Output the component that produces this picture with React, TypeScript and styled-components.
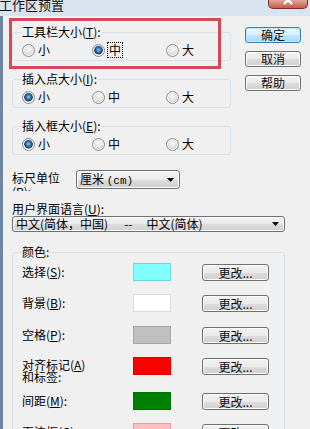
import React, { FC } from "react";
import styled, { createGlobalStyle } from "styled-components";

const GlobalStyle = createGlobalStyle`
  html, body {
    margin: 0;
    padding: 0;
  }
  body {
    width: 310px;
    height: 429px;
    overflow: hidden;
    background: #f0f0f0;
    font-family: "Noto Sans CJK SC", "Liberation Sans", sans-serif;
    font-size: 12px;
    color: #000;
  }
  * {
    box-sizing: border-box;
  }
`;

const Window = styled.div`
  position: relative;
  width: 310px;
  height: 429px;
  display: flex;
  flex-direction: column;
  overflow: hidden;
  background: #d8e3ef;
`;

const TitleBar = styled.div`
  height: 16px;
  flex: none;
  display: flex;
  justify-content: space-between;
  align-items: flex-start;
  overflow: hidden;
`;

const Title = styled.div`
  font-size: 13px;
  line-height: 13px;
  margin-top: -2px;
  margin-left: -1px;
  color: #111;
`;

const CloseButton = styled.div`
  width: 40px;
  height: 9px;
  margin-right: 2px;
  border: 1px solid #7c2f28;
  border-top: none;
  border-radius: 0 0 5px 5px;
  background: linear-gradient(#e3a699, #c65a4d);
  display: flex;
  justify-content: center;
  overflow: hidden;
`;

const Client = styled.div`
  flex: 1;
  min-height: 0;
  background: #f0f0f0;
  border-left: 3px solid #6f87a3;
  padding: 9px 0 0 9px;
  display: flex;
  flex-direction: column;
`;

const TopSection = styled.div`
  display: flex;
  gap: 14px;
`;

const GroupColumn = styled.div`
  width: 219px;
  display: flex;
  flex-direction: column;
  gap: 11px;
`;

const Group = styled.fieldset<{ $width?: number }>`
  margin: 0;
  min-width: 0;
  width: ${(p) => (p.$width ? `${p.$width}px` : "auto")};
  padding: 4px 9px 3px 9px;
  border: 1px solid #d5dfe5;
  border-radius: 3px;
`;

const Legend = styled.legend`
  padding: 0;
  font-size: 12px;
  line-height: 14px;
`;

const RadioRow = styled.div`
  display: grid;
  grid-template-columns: 70px 74px auto;
  height: 14px;
  align-items: center;
`;

const RadioOption = styled.label`
  display: flex;
  align-items: center;
  gap: 3px;
  line-height: 14px;
`;

const RadioCircle = styled.span<{ $checked?: boolean }>`
  width: 13px;
  height: 13px;
  border-radius: 50%;
  border: 1px solid #8a8f94;
  background: ${(p) =>
    p.$checked
      ? "radial-gradient(circle at 50% 45%, #8fd0f5 0, #3f7fb6 2px, #1d3e66 4px, #e8eef3 5px, #f4f4f4 100%)"
      : "radial-gradient(circle at 50% 40%, #fafafa 0, #e2e2e2 4px, #d0d0d0 6px)"};
  box-shadow: inset 0 0 0 1px #f8f8f8;
`;

const FocusText = styled.span`
  outline: 1px dotted #000;
  outline-offset: 0;
  padding: 0 1px;
`;

const ButtonColumn = styled.div`
  margin-top: 2px;
  display: flex;
  flex-direction: column;
  gap: 8px;
`;

const DialogButton = styled.div<{ $primary?: boolean; $width?: number; $height?: number }>`
  width: ${(p) => p.$width ?? 56}px;
  height: ${(p) => p.$height ?? 16}px;
  border: 1px solid ${(p) => (p.$primary ? "#3c7fb1" : "#707070")};
  border-radius: 3px;
  background: ${(p) =>
    p.$primary
      ? "linear-gradient(#eaf6fd 0%, #d9f0fc 50%, #bee6fd 51%, #a7d9f5 100%)"
      : "linear-gradient(#f2f2f2 0%, #ebebeb 50%, #dddddd 51%, #cfcfcf 100%)"};
  box-shadow: inset 0 0 0 1px ${(p) => (p.$primary ? "#c4e5f6" : "#fbfbfb")};
  display: flex;
  align-items: center;
  justify-content: center;
  font-size: 12px;
  line-height: 14px;
  color: #111;
`;

const RulerRow = styled.div`
  margin-top: 15px;
  height: 20px;
  display: flex;
  align-items: flex-start;
`;

const RulerLabel = styled.div`
  width: 64px;
  height: 20px;
  margin-top: 1px;
  line-height: 14px;
  overflow: hidden;
`;

const Select = styled.div<{ $width: number }>`
  width: ${(p) => p.$width}px;
  height: 19px;
  border: 1px solid #707070;
  border-radius: 3px;
  background: linear-gradient(#f2f2f2 0%, #ebebeb 50%, #dddddd 51%, #cfcfcf 100%);
  box-shadow: inset 0 0 0 1px #fbfbfb;
  display: flex;
  align-items: center;
  justify-content: space-between;
  padding: 0 5px 0 3px;
  line-height: 14px;
  white-space: pre;
`;

const Mono = styled.span`
  font-family: "Liberation Mono", monospace;
  font-size: 11px;
`;

const LangLabel = styled.div`
  margin-top: 12px;
  line-height: 14px;
`;

const Spacer = styled.span<{ $w: number }>`
  display: inline-block;
  width: ${(p) => p.$w}px;
`;

const ColorGroup = styled(Group)`
  margin-top: 13px;
  padding: 4px 9px 0 9px;
  flex: none;
`;

const ColorRow = styled.div<{ $h: number }>`
  height: ${(p) => p.$h}px;
  display: grid;
  grid-template-columns: 111px 38px auto;
  align-items: start;
`;

const RowLabel = styled.div<{ $twoLine?: boolean }>`
  margin-top: 2px;
  line-height: ${(p) => (p.$twoLine ? 12 : 14)}px;
`;

const Swatch = styled.div<{ $color: string }>`
  height: 18px;
  background: ${(p) => p.$color};
  border: 1px solid rgba(0, 0, 0, 0.14);
`;

const ChangeButton = styled(DialogButton)`
  margin-top: 1px;
  margin-left: 31px;
`;

const Highlight = styled.div`
  position: absolute;
  left: 9px;
  top: 18px;
  width: 212px;
  height: 51px;
  border: 3px solid #d24a55;
  pointer-events: none;
`;

const Arrow: FC = () => (
  <svg width="7" height="4" viewBox="0 0 7 4">
    <path d="M0 0 H7 L3.5 4 Z" fill="#000" />
  </svg>
);

type RadioGroupProps = {
  label: React.ReactNode;
  selected: number;
  focused?: boolean;
};

const sizes = ["小", "中", "大"];

const RadioGroup: FC<RadioGroupProps> = ({ label, selected, focused }) => (
  <Group>
    <Legend>{label}</Legend>
    <RadioRow>
      {sizes.map((s, i) => (
        <RadioOption key={s}>
          <RadioCircle $checked={i === selected} />
          {focused && i === selected ? <FocusText>{s}</FocusText> : <span>{s}</span>}
        </RadioOption>
      ))}
    </RadioRow>
  </Group>
);

type ColorItem = {
  label: React.ReactNode;
  color: string;
  h: number;
  twoLine?: boolean;
};

const colors: Array<ColorItem> = [
  { label: <>选择(<u>S</u>):</>, color: "#80ffff", h: 31 },
  { label: <>背景(<u>B</u>):</>, color: "#ffffff", h: 32 },
  { label: <>空格(<u>P</u>):</>, color: "#c0c0c0", h: 31 },
  {
    label: (
      <>
        对齐标记(<u>A</u>)
        <br />
        和标签:
      </>
    ),
    color: "#ff0000",
    h: 35,
    twoLine: true,
  },
  { label: <>间距(<u>M</u>):</>, color: "#008000", h: 31 },
  { label: <>页边框(<u>G</u>):</>, color: "#ffc0c0", h: 31 },
];

const App: FC = () => {
  return (
    <>
      <GlobalStyle />
      <Window>
        <TitleBar>
          <Title>工作区预置</Title>
          <CloseButton>
            <svg width="12" height="9" viewBox="0 0 12 9">
              <path d="M2 -4 L10 4 M10 -4 L2 4" stroke="#fff" strokeWidth="2.4" />
            </svg>
          </CloseButton>
        </TitleBar>
        <Client>
          <TopSection>
            <GroupColumn>
              <RadioGroup label={<>工具栏大小(<u>T</u>):</>} selected={1} focused />
              <RadioGroup label={<>插入点大小(<u>I</u>):</>} selected={0} />
              <RadioGroup label={<>插入框大小(<u>E</u>):</>} selected={0} />
            </GroupColumn>
            <ButtonColumn>
              <DialogButton $primary>确定</DialogButton>
              <DialogButton>取消</DialogButton>
              <DialogButton>帮助</DialogButton>
            </ButtonColumn>
          </TopSection>

          <RulerRow>
            <RulerLabel>
              标尺单位(<u>R</u>):
            </RulerLabel>
            <Select $width={104}>
              <span>
                厘米 <Mono>(cm)</Mono>
              </span>
              <Arrow />
            </Select>
          </RulerRow>

          <LangLabel>
            用户界面语言(<u>U</u>):
          </LangLabel>
          <Select $width={273}>
            <span>
              中文(简体，中国)
              <Spacer $w={16} />
              --
              <Spacer $w={14} />
              中文(简体)
            </span>
            <Arrow />
          </Select>

          <ColorGroup $width={273}>
            <Legend>颜色:</Legend>
            {colors.map((c, i) => (
              <ColorRow key={i} $h={c.h}>
                <RowLabel $twoLine={c.twoLine}>{c.label}</RowLabel>
                <Swatch $color={c.color} />
                <ChangeButton $width={67} $height={17}>
                  更改...
                </ChangeButton>
              </ColorRow>
            ))}
          </ColorGroup>
        </Client>
        <Highlight />
      </Window>
    </>
  );
};

export default App;
